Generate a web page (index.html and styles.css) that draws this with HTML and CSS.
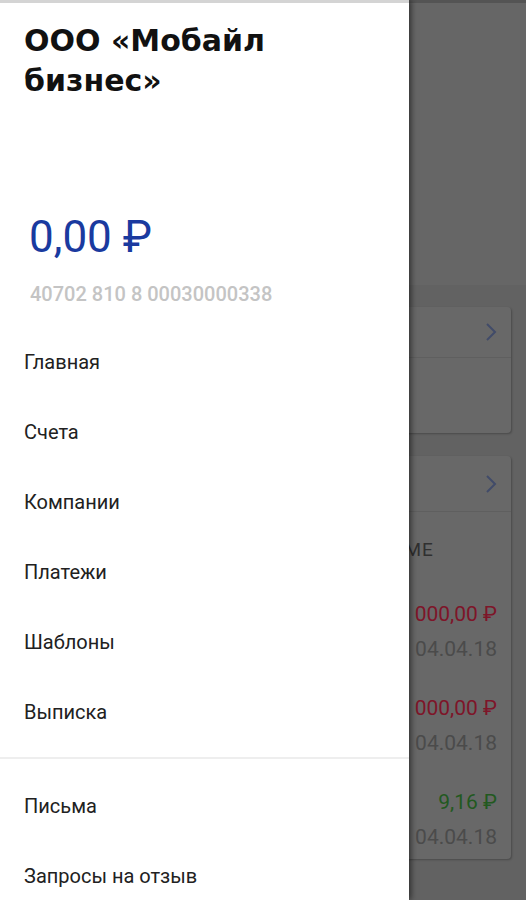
FILE: index.html
```html
<!DOCTYPE html>
<html lang="ru">
<head>
<meta charset="utf-8"/>
<meta content="width=device-width, initial-scale=1.0" name="viewport"/>
<title>Мобайл бизнес</title>
<link rel="stylesheet" href="styles.css">
</head>
<body>
<div class="screen">
  <div class="app">
    <div class="app-top"></div>
    <div class="app-body">
      <div class="card">
        <div class="card-head">
          <svg class="chevron" viewBox="0 0 12 20" width="12" height="20"><path d="M2 2l8 8-8 8" fill="none" stroke="currentColor" stroke-width="2"/></svg>
        </div>
        <div class="card-content short"></div>
      </div>
      <div class="card">
        <div class="card-head tall">
          <svg class="chevron" viewBox="0 0 12 20" width="12" height="20"><path d="M2 2l8 8-8 8" fill="none" stroke="currentColor" stroke-width="2"/></svg>
        </div>
        <div class="card-content">
          <div class="section-title">ПЛАТЕЖИ, ОТПРАВЛЕННЫЕ В СИСТЕМЕ</div>
          <div class="pay-row">
            <div class="amount minus">1 000,00 ₽</div>
            <div class="date">04.04.18</div>
          </div>
          <div class="pay-row">
            <div class="amount minus">1 000,00 ₽</div>
            <div class="date">04.04.18</div>
          </div>
          <div class="pay-row">
            <div class="amount plus">9,16 ₽</div>
            <div class="date">04.04.18</div>
          </div>
        </div>
      </div>
    </div>
  </div>

  <aside class="drawer">
    <div class="drawer-head">
      <h1 class="company">ООО «Мобайл бизнес»</h1>
      <div class="balance">0,00 ₽</div>
      <div class="account">40702 810 8 00030000338</div>
    </div>
    <nav class="menu">
      <a href="#">Главная</a>
      <a href="#">Счета</a>
      <a href="#">Компании</a>
      <a href="#">Платежи</a>
      <a href="#">Шаблоны</a>
      <a href="#">Выписка</a>
    </nav>
    <nav class="menu second">
      <a href="#">Письма</a>
      <a href="#">Запросы на отзыв</a>
    </nav>
  </aside>

  <div class="statusbar"></div>
</div>
</body>
</html>
```

FILE: styles.css
```css
* {
  box-sizing: border-box;
}

body {
  margin: 0;
  padding: 0;
  font-family: Roboto, "Noto Sans", sans-serif;
  background: #626262;
  color: #212121;
}

.screen {
  position: relative;
  width: 526px;
  height: 900px;
  overflow: hidden;
}

/* dimmed app behind the drawer */
.app-top {
  height: 285px;
  background: #666;
}

.app-body {
  padding: 22px 15px 0;
  background: #626262;
}

.card {
  background: #686868;
  border-radius: 4px;
  box-shadow: 1px 1px 2px rgba(0,0,0,0.25);
  margin-bottom: 23px;
}

.card-head {
  height: 51px;
  display: flex;
  justify-content: flex-end;
  align-items: center;
  padding-right: 14px;
  border-bottom: 1px solid #5f5f5f;
}

.card-head.tall {
  height: 56px;
}

.chevron {
  color: #414b69;
}

.card-content.short {
  height: 75px;
}

.section-title {
  padding: 30px 0 0 28px;
  font-size: 19px;
  line-height: 16px;
  letter-spacing: 1px;
  color: #303030;
  white-space: nowrap;
}

.pay-row {
  display: flex;
  flex-direction: column;
  align-items: flex-end;
  padding: 0 14px;
  margin-top: 43px;
}

.pay-row + .pay-row {
  margin-top: 24px;
}

.amount {
  font-size: 21px;
  line-height: 26px;
}

.amount.minus {
  color: #7e1529;
}

.amount.plus {
  color: #22591f;
}

.date {
  font-size: 21px;
  line-height: 44px;
  color: #4b4b4b;
}

/* drawer */
.drawer {
  position: absolute;
  top: 0;
  left: 0;
  width: 409px;
  height: 900px;
  background: white;
  box-shadow: 2px 0 6px rgba(0,0,0,0.55);
}

.drawer-head {
  padding: 21px 24px 0;
}

.company {
  margin: 0;
  font-family: "DejaVu Sans", sans-serif;
  font-size: 30px;
  line-height: 40px;
  font-weight: 700;
  color: #111;
  width: 300px;
}

.balance {
  margin-top: 111px;
  padding-left: 5px;
  font-size: 44px;
  line-height: 50px;
  color: #1a3a9f;
}

.account {
  margin-top: 20px;
  padding-left: 6px;
  font-size: 20px;
  line-height: 24px;
  font-weight: 500;
  color: #c4c4c4;
}

.menu {
  margin-top: 21px;
  padding-bottom: 10px;
  border-bottom: 2px solid #eee;
}

.menu a {
  display: flex;
  align-items: center;
  height: 70px;
  padding-left: 24px;
  font-size: 20px;
  line-height: 20px;
  color: #212121;
  text-decoration: none;
}

.menu.second {
  margin-top: 0;
  padding-top: 12px;
  border-bottom: none;
}

.statusbar {
  position: absolute;
  top: 0;
  left: 0;
  right: 0;
  height: 3px;
  background: rgba(0,0,0,0.17);
}
```
